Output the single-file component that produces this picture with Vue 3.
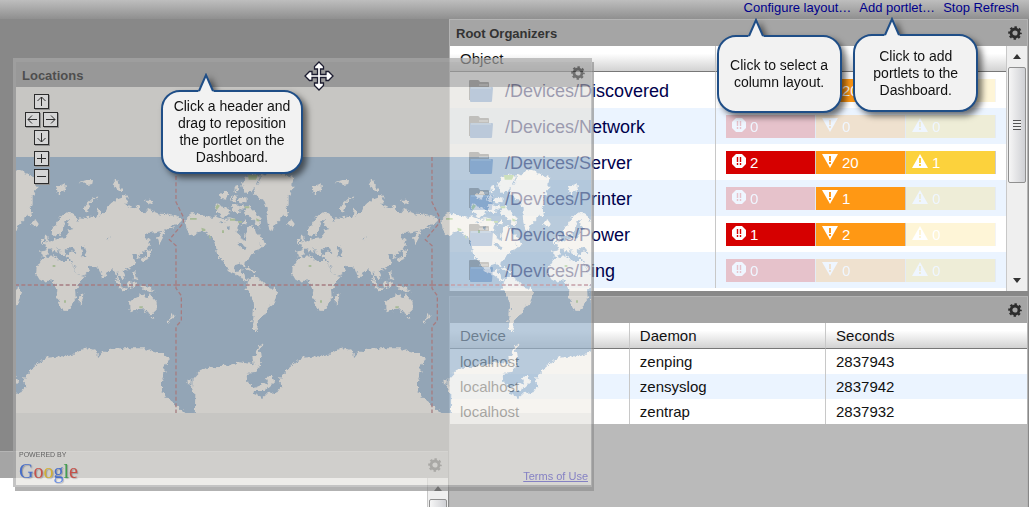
<script setup>
import { h } from 'vue'

const organizers = [
  { name: '/Devices/Discovered', events: [0, 20, 0] },
  { name: '/Devices/Network', events: [0, 0, 0] },
  { name: '/Devices/Server', events: [2, 20, 1] },
  { name: '/Devices/Printer', events: [0, 1, 0] },
  { name: '/Devices/Power', events: [1, 2, 0] },
  { name: '/Devices/Ping', events: [0, 0, 0] },
]
const severities = ['critical', 'error', 'warning']
const daemons = [
  ['localhost', 'zenping', '2837943'],
  ['localhost', 'zensyslog', '2837942'],
  ['localhost', 'zentrap', '2837932'],
]
const controls = [
  ['up', 'Pan up', 'M6.5 11V2M2.5 6l4-4 4 4'],
  ['left', 'Pan left', 'M11 6.5H2M6 2.5l-4 4 4 4'],
  ['right', 'Pan right', 'M2 6.5h9M7 2.5l4 4-4 4'],
  ['down', 'Pan down', 'M6.5 2v9M2.5 7l4 4 4-4'],
  ['in', 'Zoom in', 'M6.5 2v9M2 6.5h9'],
  ['out', 'Zoom out', 'M2 6.5h9'],
]
const googleLetters = ['G', 'o', 'o', 'g', 'l', 'e']

const GearIcon = () =>
  h('svg', { viewBox: '0 0 14 14', width: 14, height: 14, fill: 'none', stroke: 'currentColor', 'aria-hidden': 'true' }, [
    h('circle', { cx: 7, cy: 7, r: 4, 'stroke-width': 2.8 }),
    h('circle', { cx: 7, cy: 7, r: 5.8, 'stroke-width': 2, 'stroke-dasharray': '2.4 2.155', 'stroke-dashoffset': 1.2 }),
  ])

const CalloutTail = () =>
  h('svg', { viewBox: '0 0 18 20', width: 18, height: 20, 'aria-hidden': 'true' }, [
    h('path', { d: 'M1 20L2 17L9 2l7 15l1 3z', fill: '#f2f2f2' }),
    h('path', { d: 'M2 18L9 2l7 16', fill: 'none', stroke: '#1f4e87', 'stroke-width': 2 }),
  ])
</script>

<template>
  <div class="page">
    <header class="topbar">
      <div class="action">
        <a href="#">Configure layout…</a>
        <div class="callout callout-layout">
          <CalloutTail class="tail" />
          <p>Click to select a<br />column layout.</p>
        </div>
      </div>
      <div class="action">
        <a href="#">Add portlet…</a>
        <div class="callout callout-add">
          <CalloutTail class="tail" />
          <p>Click to add<br />portlets to the<br />Dashboard.</p>
        </div>
      </div>
      <div class="action"><a href="#">Stop Refresh</a></div>
    </header>

    <main class="columns">
      <section class="column">
        <div class="drop-space"></div>
        <article class="portlet side">
          <div class="portlet-head">
            <span></span>
            <button class="gear" aria-label="Portlet settings"><GearIcon /></button>
          </div>
          <div class="side-body">
            <div class="scrollbar">
              <i class="arrow arrow-up"></i>
              <i class="thumb"></i>
            </div>
          </div>
        </article>
      </section>

      <section class="column main-column">
        <article class="portlet">
          <div class="portlet-head">
            <h2>Root Organizers</h2>
            <button class="gear" aria-label="Root Organizers settings"><GearIcon /></button>
          </div>
          <div class="organizer-body">
            <div class="table-clip">
              <table class="organizers">
                <colgroup><col class="object-col" /><col /></colgroup>
                <thead>
                  <tr><th>Object</th><th></th></tr>
                </thead>
                <tbody>
                  <tr v-for="row in organizers" :key="row.name">
                    <td>
                      <div class="object">
                        <svg class="folder" viewBox="0 0 26 24" width="26" height="24" aria-hidden="true">
                          <path d="M1 2q0-1 1-1h8q1 0 2 2h8q1 0 1 1v17H1z" fill="#747474" />
                          <path d="M11 5h9v2h-9z" fill="#a5a5a5" />
                          <path d="M3 8h21q1 0 1 1l-1 13q0 1-1 1H3q-1 0-1-1V9q0-1 1-1z" fill="#6394cf" />
                          <path d="M3 9h20" stroke="#a8c8ea" />
                        </svg>
                        <span>{{ row.name }}</span>
                      </div>
                    </td>
                    <td>
                      <div class="events">
                        <span
                          v-for="(count, i) in row.events"
                          :key="i"
                          class="event"
                          :class="[severities[i], { none: count === 0 }]"
                        >
                          <svg v-if="i === 0" viewBox="0 0 14 14" width="14" height="14" aria-hidden="true">
                            <path d="M4 0h6l4 4v6l-4 4H4l-4-4V4z" fill="#fff" />
                            <path d="M5.5 3v5M8.5 3v5M5.5 9v2M8.5 9v2" stroke="#d60000" stroke-width="1.4" />
                          </svg>
                          <svg v-else-if="i === 1" viewBox="0 0 16 14" width="16" height="14" aria-hidden="true">
                            <path d="M0 0h16L8 14z" fill="#fff" />
                            <path d="M8 2v5M8 8v2" stroke="#ff9814" stroke-width="2" />
                          </svg>
                          <svg v-else viewBox="0 0 16 14" width="16" height="14" aria-hidden="true">
                            <path d="M0 14h16L8 0z" fill="#fff" />
                            <path d="M8 4v5M8 10v2" stroke="#fcd23c" stroke-width="2" />
                          </svg>
                          {{ count }}
                        </span>
                      </div>
                    </td>
                  </tr>
                </tbody>
              </table>
            </div>
            <div class="scrollbar">
              <i class="arrow arrow-up"></i>
              <i class="thumb"><b></b></i>
              <i class="arrow arrow-down"></i>
            </div>
          </div>
        </article>

        <article class="portlet">
          <div class="portlet-head">
            <span></span>
            <button class="gear" aria-label="Daemon settings"><GearIcon /></button>
          </div>
          <table class="daemons">
            <colgroup><col class="device-col" /><col class="daemon-col" /><col /></colgroup>
            <thead>
              <tr><th>Device</th><th>Daemon</th><th>Seconds</th></tr>
            </thead>
            <tbody>
              <tr v-for="row in daemons" :key="row[1]">
                <td v-for="cell in row" :key="cell">{{ cell }}</td>
              </tr>
            </tbody>
          </table>
        </article>
      </section>
    </main>

    <div class="dragged">
      <article class="ghost">
        <div class="ghost-head">
          <h2>Locations</h2>
          <button class="gear" aria-label="Locations settings"><GearIcon /></button>
        </div>
        <div class="map">
          <svg class="world" viewBox="0 0 1725 768" preserveAspectRatio="xMinYMid slice" role="img" aria-label="World map">
            <defs>
              <filter id="coast" x="-10%" y="-5%" width="120%" height="110%" color-interpolation-filters="sRGB">
                <feTurbulence type="fractalNoise" baseFrequency="0.08" numOctaves="3" seed="4" />
                <feDisplacementMap in="SourceGraphic" scale="18" xChannelSelector="R" yChannelSelector="G" />
              </filter>
              <g id="tile">
                <g fill="#f2efe9" filter="url(#coast)">
                  <path d="M28 190L40 178L48 165L62 170L85 176L105 182L125 178L140 186L160 184L178 188L190 196L184 212L182 226L194 238L200 248L206 252L208 236L216 222L214 208L224 206L236 214L240 224L250 232L262 256L250 262L262 266L250 276L236 284L226 292L218 304L206 316L204 330L198 320L182 318L174 330L178 344L190 344L200 336L196 350L206 352L208 366L220 364L212 372L196 362L180 350L166 346L150 330L132 302L122 290L120 264L112 244L96 230L80 220L68 222L60 228L44 238L32 220L30 204z" />
                  <path d="M232 106L238 88L250 72L256 56L290 40L352 60L350 76L348 100L338 116L338 140L332 152L336 172L318 182L304 196L294 208L290 222L280 216L274 196L272 176L272 152L262 128L246 124z" />
                  <path d="M196 84L212 56L244 52L252 60L240 84L226 106L212 108z" />
                  <path d="M206 148L222 148L238 162L252 184L250 212L236 202L234 190L222 180L208 170z" />
                  <path d="M122 138L134 148L152 152L164 160L158 178L138 180L120 164z" />
                  <path d="M132 112L148 102L158 112L152 128L134 126zM162 124L178 118L184 132L168 138zM172 92L186 86L190 98L178 106zM168 146L184 142L194 154L184 170L170 164zM188 122L212 124L212 136L190 136zM192 144L202 144L204 156L194 160zM194 196L208 190L212 202L198 206z" />
                  <path d="M250 252L264 250L270 264L258 268zM334 196L348 190L356 200L344 208L334 204z" />
                  <path d="M202 332L216 330L226 338L236 342L238 346L222 344L206 336z" />
                  <path d="M212 376L224 362L238 358L252 366L262 376L276 392L296 396L310 402L300 420L294 440L280 452L270 466L262 478L250 484L246 500L242 522L232 522L228 500L232 480L234 446L232 430L220 412L212 396z" />
                  <path d="M56 800L58 706L48 700L50 664L72 640L100 628L160 626L190 616L236 622L232 600L244 584L246 566L264 558L252 580L256 610L248 636L238 648L212 650L214 680L236 692L276 676L270 660L288 656L294 676L276 692L262 702L234 702L232 710L260 722L276 708L304 706L320 682L306 668L330 646L340 632L370 606L388 602L388 800z" />
                  <path d="M34 668L44 670L44 680L36 678zM-4 746L14 756L28 768L28 800H-4z" />
                  <g transform="translate(384)">
                    <path d="M-20 280L-4 278L-8 266L8 256L22 248L26 240L30 246L52 244L60 232L56 222L66 218L76 212L64 208L60 196L66 186L56 188L46 202L44 222L38 234L28 232L20 236L12 230L12 214L24 200L40 178L56 166L74 172L86 180L86 192L98 184L110 186L128 176L146 178L150 150L156 158L158 180L172 160L176 150L200 130L222 122L222 114L234 116L242 132L232 144L250 152L272 148L276 162L292 166L300 156L318 166L340 170L356 172L384 178L402 190L396 200L370 204L378 212L358 216L350 222L344 244L334 262L330 240L344 222L330 224L300 228L290 240L302 248L306 260L296 278L280 292L272 290L276 300L270 304L262 290L252 292L258 300L262 316L250 332L232 338L226 342L232 356L222 364L212 350L206 350L216 376L222 386L214 382L202 352L196 336L186 338L178 346L168 362L162 364L156 346L150 332L132 328L118 324L126 338L112 352L94 358L84 342L72 318L70 306L56 300L48 294L62 292L62 286L88 288L76 276L62 278L54 280L48 292L38 290L34 280L24 270L30 286L22 292L12 274L0 276L-2 296L-8 302L-20 298z" />
                    <path d="M-12 238L-4 230L0 246L6 262L-12 266L-4 254zM-20 250L-12 248L-12 260L-20 260z" />
                    <path d="M-36 352L-34 330L-20 308L-8 300L26 298L30 310L46 312L70 312L76 330L92 356L108 360L94 380L84 398L86 420L74 436L70 450L56 462L40 460L32 436L26 420L28 398L24 382L10 370L-14 374L-28 366z" />
                    <path d="M94 420L106 408L104 428L98 442L92 436z" />
                    <path d="M244 434L260 424L276 412L290 410L290 420L302 424L304 408L314 424L326 438L326 456L318 470L304 472L292 464L284 454L264 460L248 466L244 452zM308 480L316 480L312 488z" />
                    <path d="M354 496L368 482L372 468L380 474L368 490L358 500z" />
                    <path d="M276 386L296 388L320 404L304 404L286 398zM234 378L250 368L250 388L238 392zM200 366L208 370L224 392L242 402L226 402L212 388zM254 378L264 376L262 392L254 392zM256 344L262 348L268 370L258 366z" />
                    <path d="M278 304L294 300L300 278L310 276L302 304L284 312z" />
                    <path d="M108 164L116 140L134 124L148 118L126 140L120 168z" />
                    <path d="M24 90L54 82L52 98L40 104L34 118z" />
                    <path d="M194 72L206 68L214 88L222 96L222 108L208 98zM98 74L118 68L138 70L136 80L118 84zM290 128L306 128L318 134L300 140z" />
                    <path d="M-4 602L40 598L76 590L96 580L116 574L148 580L150 604L166 584L204 574L288 574L340 588L362 604L350 626L348 660L342 676L342 700L356 724L390 750V800H-4z" />
                  </g>
                </g>
                <g fill="#99b3cc" filter="url(#coast)">
                  <path d="M440 276L446 266L460 274L474 282L454 284zM482 268L492 266L496 284L500 298L488 298z" />
                  <path d="M184 262L198 258L204 268L214 272L200 276zM152 214L162 210L158 220zM136 192L146 196L138 202zM562 246L572 236L566 250z" />
                </g>
                <path fill="#b5d29c" d="M216 54H246L240 68H218zM118 150l6-8 8 4-10 14zM42 183h20v5H42zM76 212l12 4v6H78zM100 232l6 12h-6zM162 185h16v6h-16zM186 192h12v5h-12zM138 220h6v8h-6zM206 148h14v6h-14zM240 184l10 4v5h-8zM398 324h8v6h-8zM432 430h6v7h-6zM658 448h10v6h-10z" />
                <g fill="none" stroke="#b4777d" stroke-width="4" stroke-dasharray="12 7">
                  <path d="M0 384H768" />
                  <path d="M0 0V135L22 180V198L-20 248L0 266V394L16 416V491L0 509V768" />
                </g>
              </g>
            </defs>
            <rect width="1725" height="768" fill="#99b3cc" />
            <use href="#tile" x="-288" />
            <use href="#tile" x="480" />
            <use href="#tile" x="1248" />
          </svg>
          <div class="controls">
            <button v-for="[area, label, d] in controls" :key="area" :class="area" :aria-label="label">
              <svg viewBox="0 0 13 13" width="13" height="13" aria-hidden="true"><path :d="d" fill="none" stroke="#000" /></svg>
            </button>
          </div>
          <div class="map-foot">
            <div class="brand">
              <small>POWERED BY</small>
              <div class="google"><span v-for="(c, i) in googleLetters" :key="i" :class="'g' + i">{{ c }}</span></div>
            </div>
            <a href="#">Terms of Use</a>
          </div>
        </div>
      </article>

      <svg class="move-cursor" viewBox="-1 -1 30 30" width="30" height="30" aria-hidden="true">
        <path
          d="M14 0l4.500 4.500v2.500h-3v5.500h5.500v-3h2.500L28 14l-4.500 4.500H21v-3h-5.500V21h3v2.500L14 28l-4.500-4.500V21h3v-5.500H7v3H4.500L0 14l4.500-4.500H7v3h5.500V7h-3V4.500z"
          fill="#fff" stroke="#1c1c30" stroke-width="1.3"
        />
      </svg>

      <div class="callout callout-drag">
        <CalloutTail class="tail" />
        <p>Click a header and<br />drag to reposition<br />the portlet on the<br />Dashboard.</p>
      </div>
    </div>
  </div>
</template>

<style>
body {
  margin: 0;
}
</style>

<style scoped>
.page {
  position: relative;
  display: flex;
  flex-direction: column;
  height: 100vh;
  overflow: hidden;
  background: #888;
  color: #111;
  font-family: "Liberation Sans", Arial, sans-serif;
  font-size: 15px;
}
h2,
p {
  margin: 0;
}
.topbar {
  display: flex;
  justify-content: flex-end;
  gap: 8px;
  height: 19px;
  padding-right: 10px;
  background: linear-gradient(#bebebe, #8f8f8f);
  font-size: 13px;
  line-height: 15px;
}
.action {
  position: relative;
}
.action a {
  color: #00008b;
  text-decoration: none;
}
.columns {
  display: grid;
  grid-template-columns: 449fr 580fr;
  flex: 1;
  min-height: 0;
}
.column {
  display: flex;
  flex-direction: column;
  min-width: 0;
}
.main-column {
  gap: 5px;
  padding-right: 1px;
}
.main-column .portlet:last-child {
  flex: 1;
}
.drop-space {
  height: 432px;
}
.portlet {
  border: 1px solid #b4b4b4;
  border-width: 1px 1px 0;
  background: #bababa;
}
.portlet-head {
  display: flex;
  align-items: center;
  justify-content: space-between;
  height: 26px;
  padding: 0 5px 0 6px;
  background: #a5a5a5;
}
h2 {
  padding-top: 2px;
  color: #333;
  font-size: 13px;
  line-height: 16px;
}
.gear {
  display: flex;
  padding: 0;
  border: 0;
  background: none;
  color: #2c2c2c;
}
.side {
  flex: 1;
  display: flex;
  flex-direction: column;
  border-width: 1px 0 0;
  margin-right: 1px;
}
.side .portlet-head {
  padding-right: 6px;
}
.side-body {
  display: flex;
  flex: 1;
  justify-content: flex-end;
  overflow: hidden;
  background: #fff;
}
.organizer-body {
  display: flex;
  height: 245px;
  overflow: hidden;
  background: #fff;
}
.table-clip {
  flex: 1;
}
table {
  width: 100%;
  border-collapse: separate;
  border-spacing: 0;
  table-layout: fixed;
  background: #fff;
}
.object-col {
  width: 265px;
}
.device-col {
  width: 31%;
}
.daemon-col {
  width: 34%;
}
th {
  height: 25px;
  padding: 0 10px;
  border-bottom: 1px solid #777;
  background: linear-gradient(#fff 30%, #d2d2d2);
  font-weight: normal;
  text-align: left;
}
td {
  padding: 0 10px;
}
th + th,
td + td {
  border-left: 1px solid #c8c8c8;
}
tbody tr:nth-child(even) {
  background: #ebf4ff;
}
.organizers td {
  height: 36px;
}
.daemons td {
  height: 25px;
}
.object {
  display: flex;
  align-items: center;
  gap: 11px;
  padding: 1px 0 0 8px;
  color: #00004c;
  font-size: 18px;
  line-height: 20px;
}
.events {
  display: flex;
}
.event {
  display: flex;
  flex: 1;
  align-items: center;
  gap: 4px;
  height: 23px;
  padding-left: 6px;
  border-right: 1px solid #ccc;
  box-sizing: border-box;
  color: #fff;
}
.event svg {
  margin-bottom: 2px;
}
.critical {
  background: #d60000;
}
.error {
  background: #ff9814;
}
.warning {
  background: #fcd23c;
}
.none {
  opacity: 0.2;
}
.scrollbar {
  display: flex;
  flex-direction: column;
  align-items: center;
  width: 20px;
  border-left: 1px solid #c8c8c8;
  background: #efefef;
}
.arrow {
  flex: none;
  margin: 8px 0;
  border: 4px solid transparent;
}
.arrow-up {
  border-top: 0;
  border-bottom: 5px solid #333;
}
.arrow-down {
  border-bottom: 0;
  border-top: 5px solid #333;
  margin-top: auto;
}
.thumb {
  display: flex;
  flex: none;
  align-items: center;
  justify-content: center;
  width: 16px;
  height: 114px;
  border: 1px solid #909090;
  border-radius: 2px;
  background: linear-gradient(90deg, #f6f6f6, #cfd0d4);
}
.thumb b {
  width: 8px;
  height: 10px;
  background: repeating-linear-gradient(#555 0 1px, #eee 1px 3px);
}
.dragged {
  position: absolute;
  top: 58px;
  left: 13px;
}
.ghost {
  width: 575px;
  border: solid #a8a8a8;
  border-width: 4px 1px 2px 3px;
  box-shadow: 2px 4px 0 #8e8e8e;
  background: #e5e3df;
  opacity: 0.68;
}
.ghost-head {
  display: flex;
  align-items: center;
  justify-content: space-between;
  height: 25px;
  padding: 0 6px;
  background: #a0a0a0;
}
.ghost-head .gear {
  padding-bottom: 3px;
}
.map {
  position: relative;
  padding-top: 70px;
}
.world {
  display: block;
  width: 100%;
  height: 256px;
}
.controls {
  position: absolute;
  top: 7px;
  left: 9px;
  display: grid;
  grid-template-columns: repeat(4, 6px);
  grid-auto-rows: 15px;
  grid-template-areas:
    ". up up ."
    "left left right right"
    ". down down ."
    ". in in ."
    ". out out .";
  gap: 3px;
  justify-items: center;
}
.controls button {
  width: 15px;
  height: 15px;
  padding: 0;
  border: 1px solid #000;
  background: #fbfbfb;
  box-shadow: 1px 1px 0 #999;
  line-height: 0;
}
.up {
  grid-area: up;
}
.left {
  grid-area: left;
}
.right {
  grid-area: right;
}
.down {
  grid-area: down;
}
.in {
  grid-area: in;
  margin-top: 3px;
}
.out {
  grid-area: out;
  margin-top: 3px;
}
.map-foot {
  display: flex;
  align-items: flex-end;
  justify-content: space-between;
  height: 72px;
  padding: 0 3px;
  box-sizing: border-box;
  font-size: 11px;
  line-height: 18px;
}
.map-foot a {
  color: #6b66c8;
}
.brand small {
  display: block;
  color: #444;
  font-size: 7px;
  line-height: 9px;
}
.google {
  font-family: "Liberation Serif", serif;
  font-size: 20px;
  line-height: 24px;
  padding-bottom: 2px;
  text-shadow: 1px 1px 1px #999;
}
.g0,
.g3 {
  color: #1d54d8;
}
.g1,
.g5 {
  color: #d52a1e;
}
.g2 {
  color: #e8b400;
}
.g4 {
  color: #159a28;
}
.move-cursor {
  position: absolute;
  top: 3px;
  left: 291px;
}
.callout {
  position: absolute;
  z-index: 2;
  display: flex;
  align-items: center;
  justify-content: center;
  border: 2px solid #1f4e87;
  border-radius: 19px;
  box-sizing: border-box;
  background: #f2f2f2;
  filter: drop-shadow(4px 4px 3px rgba(0, 0, 0, 0.55));
  color: #111;
  font-size: 14px;
  line-height: 17px;
  text-align: center;
  white-space: nowrap;
}
.tail {
  position: absolute;
  top: -19px;
}
.callout-drag {
  top: 32px;
  left: 148px;
  width: 142px;
  height: 84px;
}
.callout-drag .tail {
  left: 34px;
}
.callout-layout {
  top: 35px;
  left: -27px;
  width: 125px;
  height: 78px;
}
.callout-add {
  top: 34px;
  left: -6px;
  width: 125px;
  height: 78px;
}
.action .tail {
  left: 28px;
}
</style>
